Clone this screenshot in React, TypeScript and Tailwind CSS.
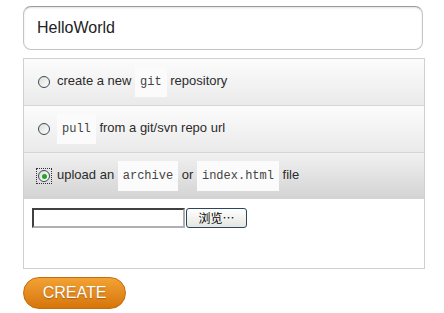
import { useState } from 'react';

const code =
  'inline-block bg-[#fbfbfb] px-[5px] py-[7px] leading-4 text-[12px] text-[#444] font-["Liberation_Mono",monospace]';

function Radio({ checked }: { checked?: boolean }) {
  return (
    <span
      className={`relative flex h-[14px] w-[14px] shrink-0 items-center justify-center ${
        checked ? 'outline-1 outline-dotted outline-[#333]' : ''
      }`}
    >
      <span className="flex h-[12px] w-[12px] items-center justify-center rounded-full border border-[#3a4a5c] bg-gradient-to-br from-[#dcdcd6] to-white">
        {checked && <span className="h-[5px] w-[5px] rounded-full bg-[#22a522]" />}
      </span>
    </span>
  );
}

export default function App() {
  const [choice, setChoice] = useState<'new' | 'pull' | 'upload'>('upload');

  const row = (active: boolean) =>
    `flex h-[46px] items-center gap-[6px] pl-[13px] cursor-pointer ${
      active
        ? 'bg-gradient-to-b from-[#f1f1f1] to-[#d3d3d3]'
        : 'bg-gradient-to-b from-[#fcfcfc] to-[#eaeaea]'
    }`;

  return (
    <div className="h-[313px] w-[444px] bg-white px-[23px] pt-[6px] font-['Liberation_Sans',Arial,sans-serif] text-[13px] text-[#2b2b2b]">
      <div className="flex h-[44px] w-[400px] items-center rounded-[8px] border border-[#c4c4c4] border-t-[#9a9a9a] pl-[13px] text-[16px] text-[#222] shadow-[inset_0_1px_2px_rgba(0,0,0,0.12)]">
        HelloWorld
      </div>

      <div className="mt-[8px] w-[402px] border border-[#d0d0d0]">
        <div className={row(choice === 'new')} onClick={() => setChoice('new')}>
          <Radio checked={choice === 'new'} />
          <span>
            create a new <span className={code}>git</span> repository
          </span>
        </div>
        <div className="h-px bg-[#d6d6d6]" />
        <div className={row(choice === 'pull')} onClick={() => setChoice('pull')}>
          <Radio checked={choice === 'pull'} />
          <span>
            <span className={code}>pull</span> from a git/svn repo url
          </span>
        </div>
        <div className="h-px bg-[#d6d6d6]" />
        <div className={row(choice === 'upload')} onClick={() => setChoice('upload')}>
          <Radio checked={choice === 'upload'} />
          <span>
            upload an <span className={code}>archive</span> or{' '}
            <span className={code}>index.html</span> file
          </span>
        </div>
        <div className="h-[69px] bg-white pl-[8px] pt-[9px]">
          <div className="flex items-center gap-[1px]">
            <div className="h-[20px] w-[153px] border-2 border-[#404040] border-b-[#b0b0b0] border-r-[#b0b0b0] bg-white" />
            <div className="flex h-[20px] w-[61px] items-center justify-center rounded-[3px] border border-[#2c4660] bg-gradient-to-b from-white to-[#e6e6e0] text-[12px] text-black font-['Noto_Sans_CJK_SC',sans-serif]">
              浏览…
            </div>
          </div>
        </div>
      </div>

      <button className="mt-[8px] flex h-[32px] w-[103px] items-center justify-center rounded-full border border-[#c66c0c] bg-gradient-to-b from-[#f2a233] to-[#d67508] text-[16px] text-white [text-shadow:0_1px_1px_rgba(120,60,0,0.5)]">
        CREATE
      </button>
    </div>
  );
}
